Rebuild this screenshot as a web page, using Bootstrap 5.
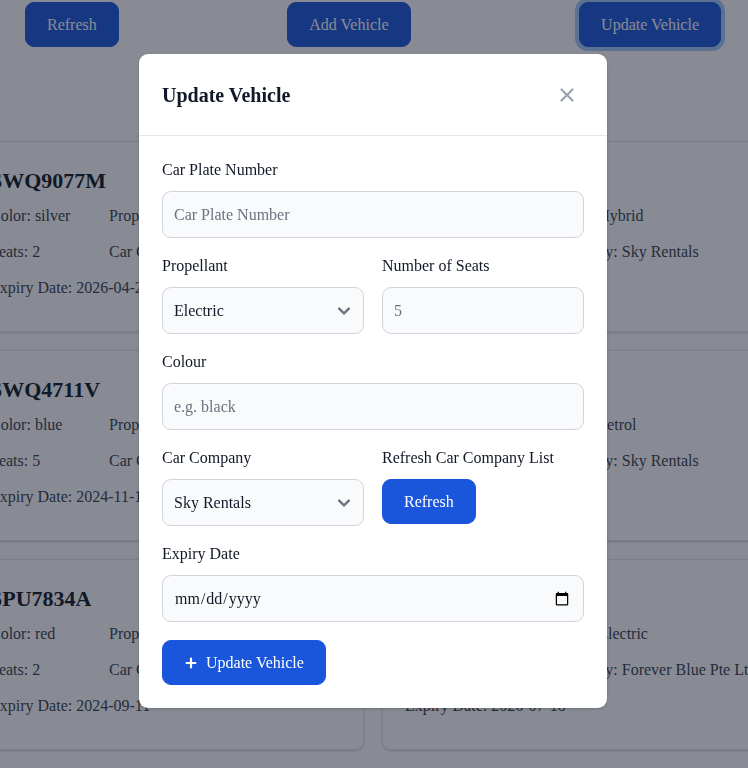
<!DOCTYPE html>
<html lang="en">
<head>
<meta charset="utf-8">
<meta name="viewport" content="width=device-width, initial-scale=1">
<title>Vehicles</title>
<link href="https://cdn.jsdelivr.net/npm/bootstrap@5.3.0/dist/css/bootstrap.min.css" rel="stylesheet">
<style>
  body { font-family: "Liberation Serif", "Times New Roman", serif; font-size: 16px; color: #111827; background: #fff; }
  .page { height: 100vh; padding-right: 2px; }
  .toolbar { padding: 2px 25px 0; margin-bottom: 94px; }
  .btn-action {
    --bs-btn-color: #fff; --bs-btn-bg: #1a56db; --bs-btn-border-color: #1a56db;
    --bs-btn-hover-color: #fff; --bs-btn-hover-bg: #1e429f; --bs-btn-hover-border-color: #1e429f;
    --bs-btn-padding-x: 21px; --bs-btn-padding-y: 10px; --bs-btn-border-radius: 9px;
    --bs-btn-font-size: 16px; --bs-btn-line-height: 23px;
  }
  .btn-ringed { box-shadow: 0 0 0 4px #a4cafe; }
  .vehicles { display: grid; grid-template-columns: 397px 397px; gap: 18px; }
  .vehicle { border: 1px solid #e5e7eb; border-radius: 9px; padding: 23px 22px 25px; box-shadow: 0 1px 3px rgba(0,0,0,.1), 0 1px 2px rgba(0,0,0,.1); }
  .vehicle h2 { font-size: 22px; line-height: 31px; font-weight: 700; margin: 0 0 2px; }
  .facts { display: grid; grid-template-columns: 119px 1fr; line-height: 36px; color: #374151; white-space: nowrap; margin: 0; }
  .facts > :last-child { grid-column: 1 / -1; }
  .modal { padding-right: 2px; }
  .modal-backdrop { --bs-backdrop-bg: #111827; }
  .modal-dialog { max-width: 468px; margin: 54px auto; }
  .modal-content { border: 0; border-radius: 9px; color: #111827; box-shadow: 0 1px 3px rgba(0,0,0,.1), 0 1px 2px rgba(0,0,0,.1); }
  .modal-header { padding: 23px; border-bottom: 1px solid #e5e7eb; }
  .modal-title { font-size: 20px; line-height: 34px; font-weight: 700; }
  .btn-dismiss { width: 35px; height: 35px; color: #9ca3af; }
  .modal-body { padding: 24px 23px 23px; }
  .fields { display: grid; grid-template-columns: 1fr 1fr; gap: 18px; }
  .wide { grid-column: 1 / -1; }
  .form-label { display: block; line-height: 20px; margin-bottom: 11px; }
  .form-control, .form-select {
    height: 47px; padding: 10px 11px; font-size: 16px; line-height: 23px;
    color: #111827; background-color: #f9fafb; border: 1px solid #d1d5db; border-radius: 9px;
  }
  .form-control::placeholder { color: #6b7280; }
  .form-control::-webkit-datetime-edit-month-field,
  .form-control::-webkit-datetime-edit-day-field,
  .form-control::-webkit-datetime-edit-year-field { padding: 0 1px; }
  .form-select {
    background-image: url("data:image/svg+xml,%3csvg xmlns='http://www.w3.org/2000/svg' fill='none' viewBox='0 0 10 6'%3e%3cpath stroke='%236b7280' stroke-linecap='round' stroke-linejoin='round' stroke-width='2' d='m1 1 4 4 4-4'/%3e%3c/svg%3e");
    background-size: 12px 12px; background-position: right 13px center;
  }
  .plus { margin: 0 4px 0 -4px; }
</style>
<script defer src="https://cdn.jsdelivr.net/npm/bootstrap@5.3.0/dist/js/bootstrap.bundle.min.js"></script>
</head>
<body class="modal-open overflow-hidden">
<main class="page overflow-hidden">
  <div class="toolbar d-flex justify-content-between">
    <button type="button" class="btn btn-action">Refresh</button>
    <button type="button" class="btn btn-action">Add Vehicle</button>
    <button type="button" class="btn btn-action btn-ringed">Update Vehicle</button>
  </div>
  <div class="d-flex justify-content-center">
    <div class="vehicles flex-shrink-0">
      <article class="vehicle">
        <h2>SWQ9077M</h2>
        <div class="facts"><span>Color: silver</span><span>Propellant: Petrol</span><span>Seats: 2</span><span>Car Company: Sky Rentals</span><span>Expiry Date: 2026-04-20</span></div>
      </article>
      <article class="vehicle">
        <h2>SPU1204K</h2>
        <div class="facts"><span>Color: white</span><span>Propellant: Hybrid</span><span>Seats: 5</span><span>Car Company: Sky Rentals</span><span>Expiry Date: 2025-02-10</span></div>
      </article>
      <article class="vehicle">
        <h2>SWQ4711V</h2>
        <div class="facts"><span>Color: blue</span><span>Propellant: Petrol</span><span>Seats: 5</span><span>Car Company: Sky Rentals</span><span>Expiry Date: 2024-11-12</span></div>
      </article>
      <article class="vehicle">
        <h2>SWQ3120B</h2>
        <div class="facts"><span>Color: black</span><span>Propellant: Petrol</span><span>Seats: 5</span><span>Car Company: Sky Rentals</span><span>Expiry Date: 2025-06-21</span></div>
      </article>
      <article class="vehicle">
        <h2>SPU7834A</h2>
        <div class="facts"><span>Color: red</span><span>Propellant: Hybrid</span><span>Seats: 2</span><span>Car Company: Sky Rentals</span><span>Expiry Date: 2024-09-11</span></div>
      </article>
      <article class="vehicle">
        <h2>SPU5567C</h2>
        <div class="facts"><span>Color: blue</span><span>Propellant: Electric</span><span>Seats: 4</span><span>Car Company: Forever Blue Pte Ltd</span><span>Expiry Date: 2026-07-18</span></div>
      </article>
    </div>
  </div>
</main>

<div class="modal-backdrop show"></div>
<div class="modal d-block" tabindex="-1" role="dialog" aria-modal="true" aria-labelledby="modalTitle">
  <div class="modal-dialog">
    <div class="modal-content">
      <div class="modal-header d-flex align-items-center justify-content-between">
        <h3 class="modal-title" id="modalTitle">Update Vehicle</h3>
        <button type="button" class="btn-dismiss btn p-0 border-0 d-flex align-items-center justify-content-center" aria-label="Close">
          <svg width="22" height="22" viewBox="0 0 20 20" fill="currentColor" aria-hidden="true"><path fill-rule="evenodd" d="M4.293 4.293a1 1 0 011.414 0L10 8.586l4.293-4.293a1 1 0 111.414 1.414L11.414 10l4.293 4.293a1 1 0 01-1.414 1.414L10 11.414l-4.293 4.293a1 1 0 01-1.414-1.414L8.586 10 4.293 5.707a1 1 0 010-1.414z" clip-rule="evenodd"/></svg>
        </button>
      </div>
      <form class="modal-body">
        <div class="fields">
          <div class="wide">
            <label class="form-label" for="plate">Car Plate Number</label>
            <input class="form-control" id="plate" type="text" placeholder="Car Plate Number">
          </div>
          <div>
            <label class="form-label" for="propellant">Propellant</label>
            <select class="form-select" id="propellant"><option>Electric</option><option>Hybrid</option><option>Petrol</option></select>
          </div>
          <div>
            <label class="form-label" for="seats">Number of Seats</label>
            <input class="form-control" id="seats" type="number" placeholder="5">
          </div>
          <div class="wide">
            <label class="form-label" for="colour">Colour</label>
            <input class="form-control" id="colour" type="text" placeholder="e.g. black">
          </div>
          <div>
            <label class="form-label" for="company">Car Company</label>
            <select class="form-select" id="company"><option>Sky Rentals</option><option>Forever Blue Pte Ltd</option></select>
          </div>
          <div>
            <label class="form-label" for="refreshList">Refresh Car Company List</label>
            <button type="button" class="btn btn-action" id="refreshList">Refresh</button>
          </div>
          <div class="wide">
            <label class="form-label" for="expiry">Expiry Date</label>
            <input class="form-control" id="expiry" type="date">
          </div>
          <div class="wide d-flex">
            <button type="submit" class="btn btn-action d-inline-flex align-items-center">
              <svg class="plus" width="22" height="22" viewBox="0 0 20 20" fill="currentColor" aria-hidden="true"><path fill-rule="evenodd" d="M10 5a1 1 0 011 1v3h3a1 1 0 110 2h-3v3a1 1 0 11-2 0v-3H6a1 1 0 110-2h3V6a1 1 0 011-1z" clip-rule="evenodd"/></svg>
              Update Vehicle
            </button>
          </div>
        </div>
      </form>
    </div>
  </div>
</div>
</body>
</html>
